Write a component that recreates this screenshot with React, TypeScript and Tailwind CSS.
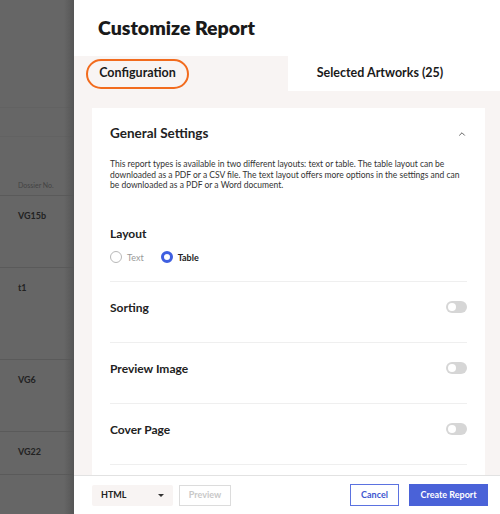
import { ChevronUp } from 'lucide-react';

const rows = [
  { id: 'VG15b', h: 'h-[72px]' },
  { id: 't1', h: 'h-[92px]' },
  { id: 'VG6', h: 'h-[72px]' },
  { id: 'VG22', h: 'h-[43px]' },
];

function Toggle() {
  return (
    <div className="w-[21px] h-[12px] rounded-full bg-[#d6d6d6] flex items-center px-[2px]">
      <div className="w-[8px] h-[8px] rounded-full bg-white" />
    </div>
  );
}

function SettingRow({ label }: { label: string }) {
  return (
    <div className="h-[61px] border-t border-[#efefef] flex justify-between items-start pt-[17px]">
      <span className="text-[12px] font-bold text-[#222]">{label}</span>
      <div className="pt-[2px]">
        <Toggle />
      </div>
    </div>
  );
}

export default function App() {
  return (
    <div
      className="w-[500px] h-[514px] flex overflow-hidden"
      style={{ fontFamily: 'Lato, "Noto Sans", sans-serif' }}
    >
      {/* dimmed page behind the drawer */}
      <div className="w-[74px] h-full bg-[#666666] flex flex-col relative">
        <div className="h-[108px] border-b border-[#626262]" />
        <div className="h-[29px] border-b border-[#626262]" />
        <div className="h-[59px] border-b border-[#5a5a5a] flex items-end pb-[5px] pl-[18px]">
          <span className="text-[7px] text-[#444]">Dossier No.</span>
        </div>
        {rows.map((r) => (
          <div key={r.id} className={`${r.h} border-b border-[#5a5a5a] pl-[18px] pt-[5px]`}>
            <span className="text-[9px] font-bold text-[#222]">{r.id}</span>
          </div>
        ))}
        <div className="absolute right-0 top-0 h-full w-[10px] bg-gradient-to-r from-transparent to-[#555]" />
      </div>

      {/* drawer */}
      <div className="flex-1 h-full bg-white flex flex-col">
        <div className="h-[56px] flex items-center px-[24px]">
          <h1 className="text-[19.5px] font-extrabold text-[#1a1a1a]">Customize Report</h1>
        </div>

        <div className="h-[35px] flex">
          <div className="w-[214px] bg-[#f8f4f3] flex items-center pl-[12px]">
            <span className="border-2 border-[#f26b1d] rounded-full h-[30px] w-[103px] flex items-center justify-center text-[12.5px] font-bold text-[#1a1a1a]">
              Configuration
            </span>
          </div>
          <div className="flex-1 flex items-center justify-center pr-[28px] text-[12.5px] font-bold text-[#1a1a1a]">
            Selected Artworks (25)
          </div>
        </div>

        <div className="flex-1 bg-[#f8f4f3] pt-[17px] pl-[18px] pr-[15px] overflow-hidden">
          <div className="bg-white px-[18px] h-[400px]">
            <div className="h-[51px] flex items-center justify-between">
              <span className="text-[13.5px] font-bold text-[#222]">General Settings</span>
              <ChevronUp className="w-[10px] h-[10px] text-[#444]" strokeWidth={2} />
            </div>
            <p className="text-[8.5px] leading-[10.5px] text-[#333]">
              This report types is available in two different layouts: text or table. The table layout can be
              downloaded as a PDF or a CSV file. The text layout offers more options in the settings and can
              be downloaded as a PDF or a Word document.
            </p>
            <div className="pt-[34px] pb-[17px]">
              <div className="text-[12px] font-bold text-[#222]">Layout</div>
              <div className="flex items-center mt-[8px]">
                <div className="w-[12px] h-[12px] rounded-full border border-[#b8b8b8]" />
                <span className="ml-[5px] text-[9px] text-[#999]">Text</span>
                <div className="ml-[17px] w-[12px] h-[12px] rounded-full border-[3px] border-[#3f5fe0]" />
                <span className="ml-[5px] text-[9px] font-bold text-[#222]">Table</span>
              </div>
            </div>
            <SettingRow label="Sorting" />
            <SettingRow label="Preview Image" />
            <SettingRow label="Cover Page" />
            <div className="border-t border-[#efefef]" />
          </div>
        </div>

        <div className="h-[39px] border-t border-[#e2e2e2] bg-white flex items-center pl-[18px] pr-[12px]">
          <div className="w-[81px] h-[21px] bg-[#f8f4f3] rounded-[2px] flex items-center justify-between pl-[9px] pr-[9px]">
            <span className="text-[9px] font-bold text-[#222]">HTML</span>
            <span className="border-x-[3px] border-x-transparent border-t-[3px] border-t-[#333]" />
          </div>
          <div className="ml-[6px] w-[52px] h-[21px] border border-[#dcdcdc] flex items-center justify-center text-[9px] font-bold text-[#c8c8c8]">
            Preview
          </div>
          <div className="flex-1" />
          <div className="w-[49px] h-[22px] border border-[#5b72e0] flex items-center justify-center text-[9px] font-bold text-[#3d56d0]">
            Cancel
          </div>
          <div className="ml-[10px] w-[79px] h-[22px] bg-[#4a62d8] flex items-center justify-center text-[9px] font-bold text-white">
            Create Report
          </div>
        </div>
      </div>
    </div>
  );
}
